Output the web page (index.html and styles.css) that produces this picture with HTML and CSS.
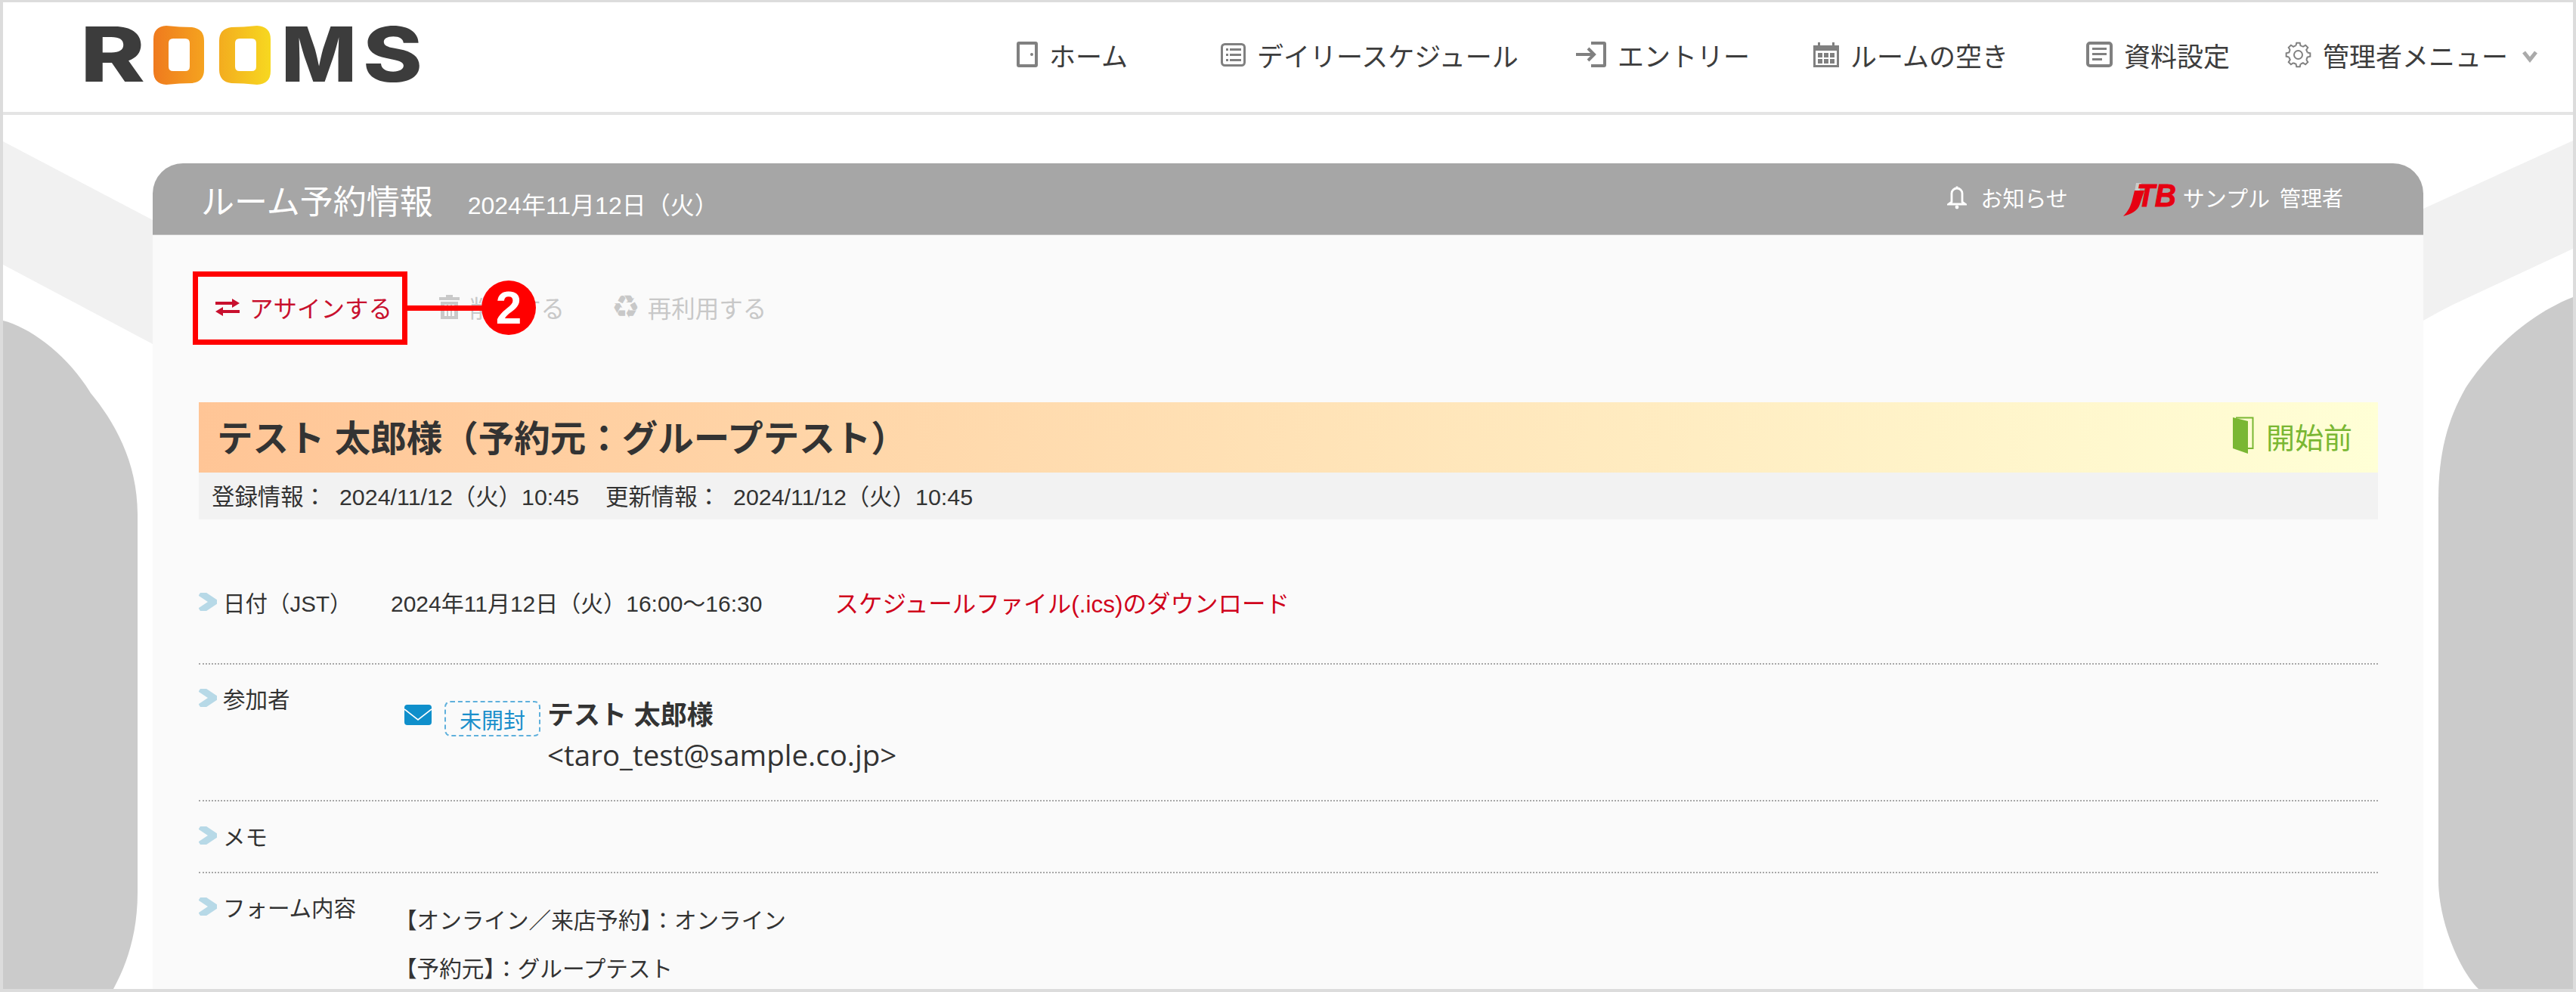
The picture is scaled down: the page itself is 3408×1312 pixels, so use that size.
FILE: index.html
```html
<!DOCTYPE html>
<html lang="ja">
<head>
<meta charset="utf-8">
<title>ルーム予約情報</title>
<link rel="stylesheet" href="styles.css">
</head>
<body>
<div class="frame">
  <header class="site-header">
    <a class="logo" aria-label="ROOMS">
      <svg class="logo-svg" width="442" height="78" viewBox="113 39 442 78">
        <defs>
          <linearGradient id="lg1" x1="0" x2="1" y1="0" y2="0"><stop offset="0" stop-color="#ef7a1e"/><stop offset="1" stop-color="#f5a31f"/></linearGradient>
          <linearGradient id="lg2" x1="0" x2="1" y1="0" y2="0"><stop offset="0" stop-color="#f3ac1f"/><stop offset="1" stop-color="#f7d820"/></linearGradient>
        </defs>
        <text class="logo-letter" x="106" y="113" textLength="86" lengthAdjust="spacingAndGlyphs">R</text>
        <path fill="url(#lg1)" fill-rule="evenodd" d="M220 39q18 2 34 2q16 2 16 18v38q0 16-16 18q-16 0-34 2q-17-1-17-18V57q0-17 17-18zM229 56q-6 0-6 6v31q0 6 6 6h16q6 0 6-6V62q0-6-6-6z"/>
        <path fill="url(#lg2)" fill-rule="evenodd" d="M306 41q16 0 34-2q18 1 18 18v42q0 17-18 18q-18-2-34-2q-16-2-16-18V59q0-16 16-18zM317 56q-6 0-6 6v31q0 6 6 6h16q6 0 6-6V62q0-6-6-6z"/>
        <text class="logo-letter" x="372" y="113" textLength="100" lengthAdjust="spacingAndGlyphs">M</text>
        <text class="logo-letter" x="480" y="113" textLength="79" lengthAdjust="spacingAndGlyphs">S</text>
      </svg>
    </a>
    <nav class="main-nav">
      <a class="nav-item">
        <svg class="ico" width="28" height="34" viewBox="0 0 28 34"><rect x="2" y="2" width="24" height="30" rx="1" fill="none" stroke="#808080" stroke-width="4"/><circle cx="20" cy="17" r="2" fill="#808080"/></svg>
        <span>ホーム</span>
      </a>
      <a class="nav-item">
        <svg class="ico" width="33" height="31" viewBox="0 0 33 31"><rect x="1.5" y="1.5" width="30" height="28" rx="4" fill="none" stroke="#808080" stroke-width="3"/><g fill="#808080"><rect x="7" y="7" width="3" height="3"/><rect x="7" y="14" width="3" height="3"/><rect x="7" y="21" width="3" height="3"/><rect x="12" y="7" width="15" height="3"/><rect x="12" y="14" width="15" height="3"/><rect x="12" y="21" width="15" height="3"/></g></svg>
        <span>デイリースケジュール</span>
      </a>
      <a class="nav-item">
        <svg class="ico" width="40" height="34" viewBox="0 0 40 34"><path d="M20 2h17a1 1 0 0 1 1 1v28a1 1 0 0 1-1 1H20" fill="none" stroke="#808080" stroke-width="4"/><path d="M0 17h24M16 9l8 8-8 8" fill="none" stroke="#808080" stroke-width="4"/></svg>
        <span>エントリー</span>
      </a>
      <a class="nav-item">
        <svg class="ico" width="34" height="34" viewBox="0 0 34 34"><path fill="#808080" d="M0 5h34v29H0zM3 12v19h28V12z" fill-rule="evenodd"/><rect x="6" y="1" width="3" height="7" fill="#808080"/><rect x="25" y="1" width="3" height="7" fill="#808080"/><g fill="#808080"><rect x="6" y="15" width="6" height="6"/><rect x="14" y="15" width="6" height="6"/><rect x="22" y="15" width="6" height="6"/><rect x="6" y="23" width="6" height="6"/><rect x="14" y="23" width="6" height="6"/><rect x="22" y="23" width="6" height="6"/></g></svg>
        <span>ルームの空き</span>
      </a>
      <a class="nav-item">
        <svg class="ico" width="35" height="34" viewBox="0 0 35 34"><rect x="2" y="2" width="31" height="30" rx="3" fill="none" stroke="#808080" stroke-width="4"/><g fill="#808080"><rect x="8" y="8" width="19" height="3"/><rect x="8" y="15" width="19" height="3"/><rect x="8" y="22" width="13" height="3"/></g></svg>
        <span>資料設定</span>
      </a>
      <a class="nav-item">
        <svg class="ico" width="35" height="35" viewBox="0 0 35 35"><defs><path id="gt" d="M29.63 14.48L33.34 15.27V19.73L29.63 20.52A12.5 12.5 0 0 1 28.21 23.94" fill="none" stroke="#808080" stroke-width="2"/></defs><use href="#gt"/><use href="#gt" transform="rotate(45 17.5 17.5)"/><use href="#gt" transform="rotate(90 17.5 17.5)"/><use href="#gt" transform="rotate(135 17.5 17.5)"/><use href="#gt" transform="rotate(180 17.5 17.5)"/><use href="#gt" transform="rotate(225 17.5 17.5)"/><use href="#gt" transform="rotate(270 17.5 17.5)"/><use href="#gt" transform="rotate(315 17.5 17.5)"/><circle cx="17.5" cy="17.5" r="5.5" fill="none" stroke="#808080" stroke-width="2"/></svg>
        <span>管理者メニュー</span>
        <svg class="nav-caret" width="22" height="18" viewBox="0 0 22 18"><path d="M3 3l8 10 8-10" fill="none" stroke="#aaa" stroke-width="5"/></svg>
      </a>
    </nav>
  </header>

  <main class="stage">
    <svg class="backdrop" width="3400" height="1156" viewBox="4 152 3400 1156" aria-hidden="true">
      <path fill="#f1f1f1" d="M4 187L202 291V455L4 350z"/>
      <path fill="#f1f1f1" d="M3404 186L3206 276V424Q3225 413 3245 403L3404 329z"/>
      <path fill="#cbcbcb" d="M4 424C40 433 90 470 120 520C150 556 182 610 182 680V1180C182 1240 165 1280 150 1308H4z"/>
      <path fill="#cbcbcb" d="M3404 393C3340 418 3290 470 3262 513C3238 555 3226 600 3226 660V1164C3226 1220 3255 1285 3279 1308H3404z"/>
    </svg>

    <section class="card">
      <div class="card-head">
        <div class="card-title"><h1>ルーム予約情報</h1><span class="card-date">2024年11月12日（火）</span></div>
        <div class="card-tools">
          <span class="notice">
            <svg width="26" height="32" viewBox="0 0 26 32"><path d="M13 1.5v3M6 11a7 7 0 0 1 14 0v11l4 3H2l4-3z" fill="none" stroke="#fff" stroke-width="2.8"/><circle cx="13" cy="29" r="2.4" fill="#fff"/></svg>
            お知らせ
          </span>
          <span class="user">
            <svg class="jtb" width="69" height="44" viewBox="0 0 69 44" aria-label="JTB"><path d="M17 0l7 0-3 12h-6z" fill="#ccc"/><path d="M0 44C7 37 10 30 12 22L15 10H28L22 28C19 37 11 41 0 44z" fill="#e60012"/><text class="jtb-text" x="18" y="31" textLength="52" lengthAdjust="spacingAndGlyphs">TB</text></svg>
            <span class="user-name">サンプル</span><span class="user-role">管理者</span>
          </span>
        </div>
      </div>

      <div class="card-body">
        <div class="toolbar">
          <a class="action action-on">
            <svg width="32" height="23" viewBox="0 0 32 23"><path fill="#c8102e" d="M0 4h22V0l10 6-10 6V8H0zM32 15H10v-4L0 17l10 6v-4h22z"/></svg>
            アサインする
          </a>
          <a class="action action-off">
            <svg width="27" height="32" viewBox="0 0 27 32"><path fill="#c9c9c9" fill-rule="evenodd" d="M9 0h9v3h9v4H0V3h9zM2 9h23v23H2zM7 13v15h3V13zM12 13v15h3V13zM17 13v15h3V13z"/></svg>
            削除する
          </a>
          <a class="action action-off action-recycle">
            <span class="recycle">♻</span>
            再利用する
          </a>
        </div>

        <div class="booking-title">
          <h2>テスト 太郎様（予約元：グループテスト）</h2>
          <span class="status">
            <svg width="28" height="50" viewBox="0 0 28 50"><path d="M4 1.5H26.5V42H20" fill="none" stroke="#7ab733" stroke-width="2"/><path fill="#7ab733" d="M0 1l20 5v43L0 42z"/></svg>
            開始前
          </span>
        </div>
        <div class="booking-meta">
          <span>登録情報：</span><span class="meta-date">2024/11/12（火）10:45</span><span class="meta-next">更新情報：</span><span class="meta-date">2024/11/12（火）10:45</span>
        </div>

        <div class="row row-date">
          <div class="row-label"><svg class="chev" width="24" height="24" viewBox="0 0 24 24"><path d="M2 0L20 12 2 24" fill="none" stroke="#b7d9e7" stroke-width="9"/></svg>日付（JST）</div>
          <div class="row-value date-value"><span>2024年11月12日（火）16:00〜16:30</span><a class="ics">スケジュールファイル(.ics)のダウンロード</a></div>
        </div>

        <div class="row row-people">
          <div class="row-label"><svg class="chev" width="24" height="24" viewBox="0 0 24 24"><path d="M2 0L20 12 2 24" fill="none" stroke="#b7d9e7" stroke-width="9"/></svg>参加者</div>
          <div class="row-value person">
            <svg class="mail" width="36" height="27" viewBox="0 0 36 27"><rect width="36" height="27" rx="4" fill="#0f8fcb"/><path d="M0 6l18 14L36 6" fill="none" stroke="#fff" stroke-width="1.6"/></svg>
            <span class="badge">未開封</span>
            <div class="person-text"><strong>テスト 太郎様</strong><span class="email">&lt;taro_test@sample.co.jp&gt;</span></div>
          </div>
        </div>

        <div class="row row-memo">
          <div class="row-label"><svg class="chev" width="24" height="24" viewBox="0 0 24 24"><path d="M2 0L20 12 2 24" fill="none" stroke="#b7d9e7" stroke-width="9"/></svg>メモ</div>
          <div class="row-value"></div>
        </div>

        <div class="row row-form">
          <div class="row-label"><svg class="chev" width="24" height="24" viewBox="0 0 24 24"><path d="M2 0L20 12 2 24" fill="none" stroke="#b7d9e7" stroke-width="9"/></svg>フォーム内容</div>
          <div class="row-value form-lines"><p>【オンライン／来店予約】：オンライン</p><p>【予約元】：グループテスト</p></div>
        </div>
      </div>

      <div class="callout" aria-hidden="true"><span class="callout-box"></span><span class="callout-line"></span><span class="callout-num">2</span></div>
    </section>
  </main>
</div>
</body>
</html>
```

FILE: styles.css
```css
* { box-sizing: border-box; }
html, body { margin: 0; padding: 0; background: #fff; }
body {
  width: 3408px;
  height: 1312px;
  overflow: hidden;
  color: #333;
  font-family: "Liberation Sans", "Noto Sans CJK JP", sans-serif;
  font-size: 30px;
}
h1, h2, p { margin: 0; font-weight: normal; }

.frame {
  width: 3408px;
  height: 1312px;
  border: solid #dcdcdc;
  border-width: 3px 4px 4px 4px;
  overflow: hidden;
  display: flex;
  flex-direction: column;
}

.site-header {
  flex: none;
  height: 149px;
  background: #fff;
  border-bottom: 4px solid #e4e4e4;
  display: flex;
  align-items: center;
  justify-content: space-between;
  padding: 0 46px 5px 109px;
}
.logo { display: block; line-height: 0; }
.logo-svg { overflow: visible; }
.logo-letter {
  font-family: "Inter", sans-serif;
  font-weight: 800;
  font-size: 100px;
  fill: #3c3c3c;
}

.main-nav {
  display: grid;
  grid-template-columns: 270px 470px 314px 361px 263px auto;
  align-items: center;
  color: #3d3d3d;
  font-size: 35px;
  margin-top: -2px;
}
.nav-item { display: flex; align-items: center; gap: 15px; white-space: nowrap; }
.ico { flex: none; }
.nav-caret { margin: 6px 0 0 3px; }

.stage { position: relative; flex: 1; min-height: 0; padding: 64px 198px 0; }
.backdrop { position: absolute; left: 0; top: 0; }

.card {
  position: relative;
  width: 3004px;
  height: 1200px;
  background: #fafafa;
  border-radius: 40px 40px 0 0;
}
.card-head {
  height: 95px;
  background: #a6a6a6;
  border-bottom: 1px solid #c4c4c4;
  border-radius: 40px 40px 0 0;
  display: flex;
  align-items: center;
  justify-content: space-between;
  padding: 0 106px 0 64px;
  color: #fff;
}
.card-title { display: flex; align-items: baseline; gap: 46px; margin-top: 2px; }
.card-title h1 { font-size: 44px; }
.card-date { font-size: 32px; }
.card-tools { display: flex; align-items: center; gap: 73px; font-size: 29px; margin-top: -4px; }
.notice { display: flex; align-items: center; gap: 18px; }
.user { display: flex; align-items: center; }
.jtb { margin: 6px 10px 0 0; overflow: visible; }
.jtb-text { font-family: "Liberation Sans", sans-serif; font-weight: bold; font-style: italic; font-size: 42px; fill: #e60012; stroke: #e60012; stroke-width: 1; }
.user-role { margin-left: 13px; font-size: 28px; }

.card-body { padding: 0 60px 0 61px; }
.toolbar {
  height: 221px;
  padding: 0 0 31px 22px;
  display: flex;
  align-items: center;
  gap: 62px;
  font-size: 31.5px;
}
.action { display: flex; align-items: center; gap: 13px; white-space: nowrap; }
.action-on { color: #c8102e; }
.action-off { color: #c8c8c8; }
.action-recycle { gap: 10px; }
.recycle { font-family: "DejaVu Sans", sans-serif; font-size: 42px; line-height: 1; }

.booking-title {
  height: 93px;
  display: flex;
  align-items: center;
  justify-content: space-between;
  padding: 0 34px 5px 24px;
  background: linear-gradient(90deg, #ffc596 0%, #ffffd6 100%);
}
.booking-title h2 { font-size: 47.5px; font-weight: bold; color: #333; }
.status { display: flex; align-items: center; gap: 16px; color: #7ab733; font-size: 38px; }
.booking-meta {
  height: 62px;
  display: flex;
  align-items: center;
  padding: 0 0 2px 17px;
  background: #f2f2f2;
  font-size: 30.4px;
  white-space: nowrap;
}
.meta-date { margin-left: 17px; }
.meta-next { margin-left: 35px; }

.row {
  display: grid;
  grid-template-columns: 272px 1fr;
  align-items: start;
  border-bottom: 2px dotted #a8a8a8;
}
.row:last-child { border-bottom: 0; }
.row-label {
  display: flex;
  align-items: center;
  gap: 8px;
  height: 30px;
  font-size: 29.5px;
  white-space: nowrap;
}
.chev { flex: none; }
.row-date { grid-template-columns: 254px 1fr; padding: 94px 0 66px; }
.date-value { display: flex; align-items: center; height: 30px; font-size: 30px; white-space: nowrap; }
.ics { margin-left: 96px; color: #d0021b; font-size: 31.5px; }
.row-people { padding: 29px 0 33px; }
.person { display: flex; align-items: flex-start; margin-top: 11px; }
.mail { flex: none; margin: 13px 17px 0 0; }
.badge {
  flex: none;
  height: 47px;
  margin: 8px 9px 0 0;
  padding: 0 18px;
  display: flex;
  align-items: center;
  border: 2px dashed #5fb0dc;
  border-radius: 8px;
  color: #1a8fcb;
  font-size: 29px;
}
.person-text { display: flex; flex-direction: column; font-size: 35px; line-height: 53px; }
.person-text strong { font-weight: bold; }
.email { font-family: "Open Sans", sans-serif; font-size: 38.5px; }
.row-memo { padding: 30px 0 33px; }
.row-form { padding: 29px 0 0; }
.form-lines { line-height: 64px; font-size: 29.6px; font-family: "Noto Sans CJK JP", sans-serif; margin-left: -13px; }

.callout { position: absolute; left: 53px; top: 143px; width: 456px; height: 97px; }
.callout-box { position: absolute; left: 0; top: 0; width: 284px; height: 97px; border: 7px solid #f00; }
.callout-line { position: absolute; left: 284px; top: 45px; width: 110px; height: 7px; background: #f00; }
.callout-num {
  position: absolute;
  left: 382px;
  top: 12px;
  width: 72px;
  height: 72px;
  border-radius: 50%;
  background: #f00;
  color: #fff;
  font-family: "Liberation Sans", sans-serif;
  font-weight: bold;
  font-size: 62px;
  line-height: 72px;
  text-align: center;
}
```
